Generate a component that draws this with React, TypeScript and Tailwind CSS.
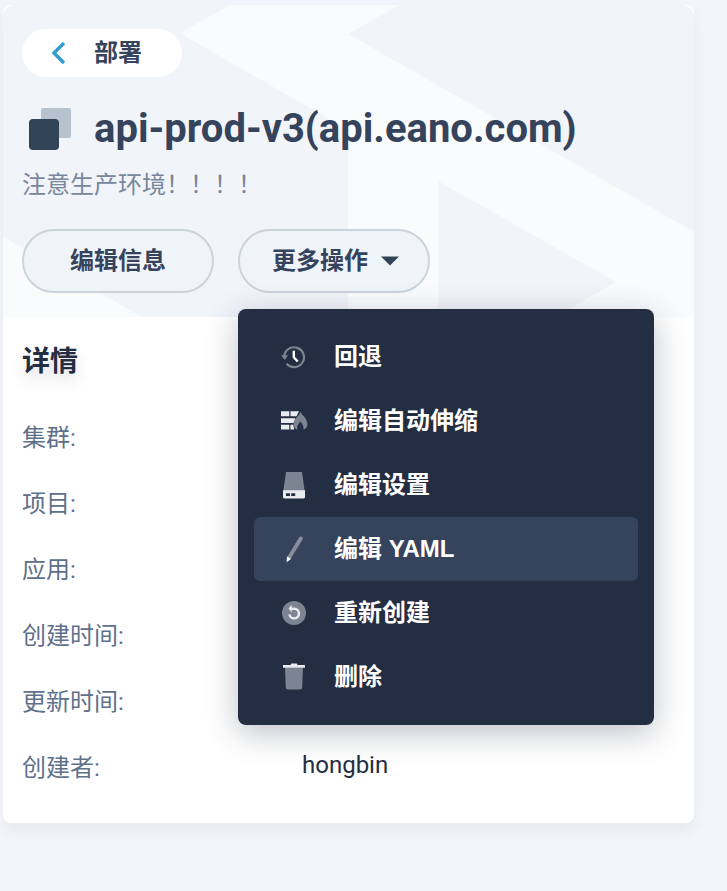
import type { ReactNode } from "react";

type Action = { label: string; icon: ReactNode; active?: boolean };

const actions: Action[] = [
  { label: "回退", icon: <RollbackIcon /> },
  { label: "编辑自动伸缩", icon: <FirewallIcon /> },
  { label: "编辑设置", icon: <StorageIcon /> },
  { label: "编辑 YAML", icon: <PenIcon />, active: true },
  { label: "重新创建", icon: <RestartIcon /> },
  { label: "删除", icon: <TrashIcon /> },
];

const details = [
  { label: "集群:", value: "" },
  { label: "项目:", value: "" },
  { label: "应用:", value: "" },
  { label: "创建时间:", value: "" },
  { label: "更新时间:", value: "" },
  { label: "创建者:", value: "hongbin" },
];

function RollbackIcon() {
  return (
    <svg viewBox="0 0 28 28" className="size-7" fill="none" aria-hidden="true">
      <path d="M4.2 13.500a9.900 9.900 0 1 1 2.400 7.200" stroke="#7c8391" strokeWidth="2.200" />
      <path d="M1 12.200h7l-3.200 4.800z" fill="#7c8391" />
      <path d="M13.800 7.800v6.400l4 4.300" stroke="#fff" strokeWidth="2.400" />
    </svg>
  );
}

function FirewallIcon() {
  return (
    <svg viewBox="0 0 28 28" className="size-7" aria-hidden="true">
      <path
        d="M1 4.300h8.300v5H1zM10.500 4.300H19L16.500 9.300h-6zM1 11.200h14.500L13.500 16H1zM1 17.700h8.300v4.900H1zM10.500 17.700h2.700l1 4.900h-3.700z"
        fill="#e9ebee"
      />
      <path
        d="M20.300 4.800c1 2.300 3.400 3.800 5.200 6.700 1.300 2.100 1.900 4 1.900 5.800 0 2.500-1.300 4.500-3.900 5.400.4-3-.7-5.200-3.200-8.200-2.300 2.600-3.500 4.800-3 8.200-2.600-.9-3.800-2.900-3.800-5.400 0-2.400 1.200-4.500 3-6.600 1.700-2 3.200-3.400 3.800-5.900z"
        fill="#7c8391"
      />
    </svg>
  );
}

function StorageIcon() {
  return (
    <svg viewBox="0 0 28 28" className="size-7" aria-hidden="true">
      <path d="M6 1h16l2.700 19H3.300z" fill="#7c8391" />
      <path d="M3 19.200h22V26a1.500 1.500 0 0 1-1.500 1.500h-19A1.500 1.500 0 0 1 3 26z" fill="#e9ebee" />
      <path d="M6 22.300h4v2.800H6zM11.200 22.300h4v2.800h-4z" fill="#242e42" />
    </svg>
  );
}

function PenIcon() {
  return (
    <svg viewBox="0 0 28 28" className="size-7" fill="none" aria-hidden="true">
      <path d="M20.800 3.500L9.200 22.500" stroke="#868e9c" strokeWidth="4" strokeLinecap="round" />
      <path d="M7 21.500l4 2.400-4.400 3.400z" fill="#fff" />
    </svg>
  );
}

function RestartIcon() {
  return (
    <svg viewBox="0 0 28 28" className="size-7" fill="none" aria-hidden="true">
      <circle cx="14" cy="14" r="12" fill="#7c8391" />
      <path d="M10.500 9.800h3.800a4.800 4.800 0 1 1-4.900 5.600" stroke="#e9ebee" strokeWidth="2.400" />
      <path d="M11.600 5.800v7.600L8.600 9.600z" fill="#e9ebee" />
    </svg>
  );
}

function TrashIcon() {
  return (
    <svg viewBox="0 0 28 28" className="size-7" aria-hidden="true">
      <path d="M5 4.500h18l-.8 20.300a2 2 0 0 1-2 1.700H7.800a2 2 0 0 1-2-1.700z" fill="#7c8391" />
      <path d="M3 2h7.500l.8-1.500h5.400l.8 1.500H25v2.800H3z" fill="#e9ebee" />
    </svg>
  );
}

function HeaderPattern() {
  return (
    <svg
      viewBox="0 0 691 312"
      preserveAspectRatio="xMinYMin slice"
      className="absolute inset-0 size-full rounded-t-xl"
      aria-hidden="true"
    >
      <rect width="691" height="312" fill="#f1f5fa" />
      <path
        d="M227 0L177 28 345 125V312H435V176L613 277 552 312H691V227L345 29 396 0zM0 232L139 312H0z"
        fill="#fafbfd"
      />
    </svg>
  );
}

export default function App() {
  return (
    <div className="min-h-screen bg-[#f4f5fa] pt-[5px] pr-[33px] pb-16 pl-[3px] font-[Roboto,'Noto_Sans_CJK_SC',sans-serif] text-2xl text-[#36435c]">
      <main className="rounded-lg bg-white shadow-[0_8px_16px_0_rgba(36,46,66,0.06)]">
        <header className="relative px-[19px] pt-6 pb-6">
          <HeaderPattern />
          <div className="relative">
            <a href="#workloads" className="flex h-12 w-40 items-center rounded-full bg-white font-bold">
              <svg viewBox="0 0 24 24" className="mr-6 ml-6 size-6" fill="none" aria-hidden="true">
                <path d="M18 2L8 12l10 10" stroke="#329dce" strokeWidth="3.500" />
              </svg>
              部署
            </a>
            <div className="mt-6 flex h-14 items-center gap-4">
              <svg viewBox="0 0 56 56" className="size-14 shrink-0" aria-hidden="true">
                <rect x="19" y="7" width="30" height="30" rx="2" fill="#b6c2cd" />
                <rect x="7" y="18" width="30" height="31" rx="4" fill="#324558" />
              </svg>
              <h1 className="text-[40px] leading-14 font-bold">api-prod-v3(api.eano.com)</h1>
            </div>
            <p className="mt-3 leading-8 text-[#79879c]">注意生产环境！！！！</p>
            <div className="mt-7 flex gap-6">
              <button
                type="button"
                className="h-16 w-48 rounded-full border-2 border-[#ccd3db] bg-[#eff4f9] font-bold"
              >
                编辑信息
              </button>
              <div className="relative">
                <button
                  type="button"
                  aria-haspopup="menu"
                  aria-expanded="true"
                  className="flex h-16 w-48 items-center justify-center gap-3 rounded-full border-2 border-[#ccd3db] bg-[#eff4f9] pl-1 font-bold"
                >
                  更多操作
                  <svg viewBox="0 0 20 10" className="h-[10px] w-5" aria-hidden="true">
                    <path d="M1 0.500h18L10 9.500z" fill="#324558" />
                  </svg>
                </button>
                <div
                  role="menu"
                  className="absolute top-full left-0 z-10 mt-4 w-[416px] rounded-lg bg-[#242e42] p-4 font-['Liberation_Sans','Noto_Sans_CJK_SC',sans-serif] shadow-[0_8px_32px_0_rgba(36,46,66,0.3)]"
                >
                  {actions.map((action) => (
                    <button
                      key={action.label}
                      type="button"
                      role="menuitem"
                      className={`flex h-16 w-full items-center gap-[26px] rounded-md pl-[26px] text-left font-bold text-white ${
                        action.active ? "bg-[#36435c]" : ""
                      }`}
                    >
                      {action.icon}
                      {action.label}
                    </button>
                  ))}
                </div>
              </div>
            </div>
          </div>
        </header>
        <section className="px-[19px] pt-6 pb-[22px]">
          <h2 className="text-[28px] leading-[42px] font-bold text-[#242e42] [text-shadow:0_8px_16px_rgba(36,46,66,0.15)]">
            详情
          </h2>
          <dl className="mt-[22px]">
            {details.map((item) => (
              <div key={item.label} className="flex h-[66px] items-center">
                <dt className="w-[280px] text-[#5f708a]">{item.label}</dt>
                <dd className="pb-[6px] text-[#242e42]">{item.value}</dd>
              </div>
            ))}
          </dl>
        </section>
      </main>
    </div>
  );
}
